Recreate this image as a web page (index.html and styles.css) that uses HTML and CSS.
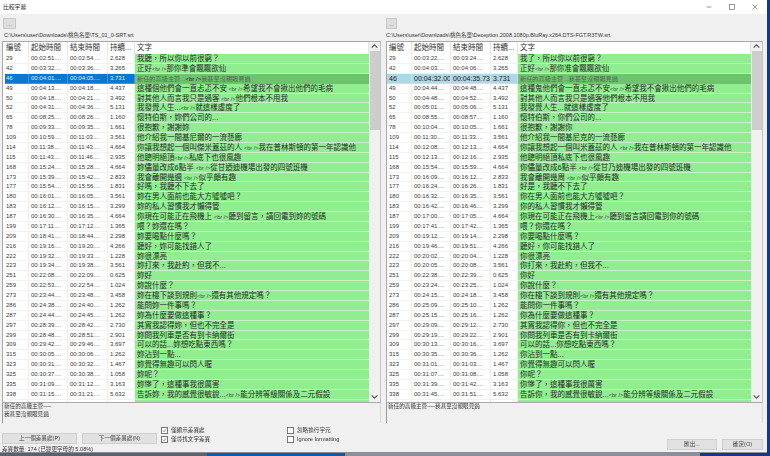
FILE: index.html
```html
<!DOCTYPE html>
<html lang="zh-Hant">
<head>
<meta charset="utf-8">
<title>比較字幕</title>
<link rel="stylesheet" href="styles.css">
</head>
<body>
<div class="window">
  <header class="titlebar">
    <span class="title">比較字幕</span>
    <div class="controls">
      <svg class="ctl" viewBox="0 0 10 10"><path d="M1 5h8" /></svg>
      <svg class="ctl" viewBox="0 0 10 10"><rect x="1" y="1" width="8" height="8" /></svg>
      <svg class="ctl" viewBox="0 0 10 10"><path d="M1 1l8 8M9 1l-8 8" /></svg>
    </div>
  </header>
  <main class="panes">
    <section class="pane pane-left">
      <button class="browse">...</button>
      <div class="path">C:\Users\user\Downloads\桃色名單\TS_01_0-SRT.srt</div>
      <div class="list">
        <div class="table">
          <div class="row head"><span>編號</span><span>起始時間</span><span>結束時間</span><span>持續...</span><span>文字</span></div>
          <div class="row"><span>29</span><span>00:02:51....</span><span>00:02:54....</span><span>2.628</span><span class="txt">我聽，所以你以前很窮？</span></div>
          <div class="row"><span>42</span><span>00:03:32....</span><span>00:03:36....</span><span>3.265</span><span class="txt">正好<i>&lt;br /&gt;</i>那你準會飄飄欲仙</span></div>
          <div class="row sel"><span>46</span><span>00:04:01....</span><span>00:04:05....</span><span>3.731</span><span class="txt">新任的高級主管...<i>&lt;br /&gt;</i>我甚至沒親眼見過</span></div>
          <div class="row"><span>49</span><span>00:04:13....</span><span>00:04:18....</span><span>4.437</span><span class="txt">這種個他們會一直忐忑不安<i> &lt;br /&gt;</i>希望我不會揪出他們的毛病</span></div>
          <div class="row"><span>50</span><span>00:04:18....</span><span>00:04:21....</span><span>3.492</span><span class="txt">對其他人而言我只是過客<i> &lt;br /&gt;</i>他們根本不甩我</span></div>
          <div class="row"><span>52</span><span>00:04:31....</span><span>00:04:36....</span><span>5.131</span><span class="txt">我發覺人生...<i>&lt;br /&gt;</i>就這樣虛度了</span></div>
          <div class="row"><span>65</span><span>00:08:25....</span><span>00:08:26....</span><span>1.160</span><span class="txt">懷特伯斯，妳們公司的...</span></div>
          <div class="row"><span>78</span><span>00:09:33....</span><span>00:09:35....</span><span>1.661</span><span class="txt">很抱歉，謝謝妳</span></div>
          <div class="row"><span>109</span><span>00:10:59....</span><span>00:11:03....</span><span>3.561</span><span class="txt">他介紹我一間基尼爾的一流藝廊</span></div>
          <div class="row"><span>114</span><span>00:11:38....</span><span>00:11:43....</span><span>4.664</span><span class="txt">你讓我想起一個叫傑米蓋茲的人 <i>&lt;br /&gt;</i>我在普林斯頓的第一年認識他</span></div>
          <div class="row"><span>115</span><span>00:11:43....</span><span>00:11:46....</span><span>2.935</span><span class="txt">他聰明絕頂<i>&lt;br /&gt;</i>私底下也很風趣</span></div>
          <div class="row"><span>168</span><span>00:15:24....</span><span>00:15:28....</span><span>4.664</span><span class="txt">妳儘量改成6點半 <i>&lt;br /&gt;</i>從甘迺迪機場出發的四號班機</span></div>
          <div class="row"><span>173</span><span>00:15:39....</span><span>00:15:42....</span><span>2.833</span><span class="txt">我會離開幾週 <i>&lt;br /&gt;</i>似乎頗有趣</span></div>
          <div class="row"><span>177</span><span>00:15:54....</span><span>00:15:56....</span><span>1.831</span><span class="txt">好嗎，我聽不下去了</span></div>
          <div class="row"><span>180</span><span>00:16:01....</span><span>00:16:05....</span><span>3.561</span><span class="txt">妳在男人面前也能大方噓噓吧？</span></div>
          <div class="row"><span>183</span><span>00:16:12....</span><span>00:16:15....</span><span>3.299</span><span class="txt">妳的私人習慣我才懶得管</span></div>
          <div class="row"><span>187</span><span>00:16:30....</span><span>00:16:35....</span><span>4.664</span><span class="txt">你現在可能正在飛機上 <i>&lt;br /&gt;</i>聽到留言，請回電到妳的號碼</span></div>
          <div class="row"><span>199</span><span>00:17:11....</span><span>00:17:12....</span><span>1.365</span><span class="txt">喂？妳還在嗎？</span></div>
          <div class="row"><span>209</span><span>00:18:41....</span><span>00:18:44....</span><span>2.298</span><span class="txt">妳要喝點什麼嗎？</span></div>
          <div class="row"><span>216</span><span>00:19:16....</span><span>00:19:20....</span><span>4.266</span><span class="txt">聽好，妳可能找錯人了</span></div>
          <div class="row"><span>222</span><span>00:19:32....</span><span>00:19:33....</span><span>1.228</span><span class="txt">妳很漂亮</span></div>
          <div class="row"><span>223</span><span>00:19:34....</span><span>00:19:38....</span><span>3.561</span><span class="txt">妳打來，我赴約，但我不...</span></div>
          <div class="row"><span>251</span><span>00:22:08....</span><span>00:22:09....</span><span>0.625</span><span class="txt">妳好</span></div>
          <div class="row"><span>259</span><span>00:22:53....</span><span>00:22:54....</span><span>1.024</span><span class="txt">妳說什麼？</span></div>
          <div class="row"><span>273</span><span>00:23:44....</span><span>00:23:48....</span><span>3.458</span><span class="txt">妳在樓下談到規則<i>&lt;br /&gt;</i>還有其他規定嗎？</span></div>
          <div class="row"><span>286</span><span>00:24:38....</span><span>00:24:40....</span><span>1.262</span><span class="txt">能問妳一件事嗎？</span></div>
          <div class="row"><span>287</span><span>00:24:44....</span><span>00:24:45....</span><span>1.262</span><span class="txt">妳為什麼要做這種事？</span></div>
          <div class="row"><span>297</span><span>00:28:39....</span><span>00:28:42....</span><span>2.730</span><span class="txt">其實我認得妳，但也不完全是</span></div>
          <div class="row"><span>299</span><span>00:28:48....</span><span>00:28:51....</span><span>2.901</span><span class="txt">妳問我列車是否有到卡納爾街</span></div>
          <div class="row"><span>309</span><span>00:29:42....</span><span>00:29:46....</span><span>3.697</span><span class="txt">可以的話...妳想吃點東西嗎？</span></div>
          <div class="row"><span>315</span><span>00:30:05....</span><span>00:30:06....</span><span>1.262</span><span class="txt">妳沾到一點...</span></div>
          <div class="row"><span>323</span><span>00:30:31....</span><span>00:30:32....</span><span>1.467</span><span class="txt">妳覺得無趣可以閃人喔</span></div>
          <div class="row"><span>325</span><span>00:30:37....</span><span>00:30:38....</span><span>1.058</span><span class="txt">妳呢？</span></div>
          <div class="row"><span>335</span><span>00:31:09....</span><span>00:31:12....</span><span>3.163</span><span class="txt">妳慘了，這種事我很厲害</span></div>
          <div class="row"><span>338</span><span>00:31:15....</span><span>00:31:21....</span><span>5.632</span><span class="txt">告訴妳，我的感覺很敏銳...<i>&lt;br /&gt;</i>能分辨等級關係及二元假設</span></div>
          <div class="row"><span></span><span></span><span></span><span></span><span class="txt"></span></div>
        </div>
        <div class="scrollbar">
          <svg class="arrow" viewBox="0 0 8 8"><path d="M1.5 5L4 2.5L6.5 5" /></svg>
          <div class="thumb"></div>
          <svg class="arrow" viewBox="0 0 8 8"><path d="M1.5 3L4 5.5L6.5 3" /></svg>
        </div>
      </div>
      <div class="preview">新任的高級主管──<br>我甚至沒親眼見過</div>
    </section>
    <section class="pane pane-right">
      <button class="browse">...</button>
      <div class="path">C:\Users\user\Downloads\桃色名單\Deception.2008.1080p.BluRay.x264.DTS-FGT.R3TW.srt</div>
      <div class="list">
        <div class="table">
          <div class="row head"><span>編號</span><span>起始時間</span><span>結束時間</span><span>持續...</span><span>文字</span></div>
          <div class="row"><span>29</span><span>00:03:22....</span><span>00:03:24....</span><span>2.628</span><span class="txt">我了，所以你以前很窮？</span></div>
          <div class="row"><span>42</span><span>00:04:03....</span><span>00:04:06....</span><span>3.265</span><span class="txt">正好<i>&lt;br /&gt;</i>那你准會飄飄欲仙</span></div>
          <div class="row alt"><span>46</span><span>00:04:32.00</span><span>00:04:35.73</span><span>3.731</span><span class="txt">新任的高級主管...我甚至沒親眼見過</span></div>
          <div class="row"><span>49</span><span>00:04:44....</span><span>00:04:48....</span><span>4.437</span><span class="txt">這種鬼他們會一直忐忑不安<i>&lt;br /&gt;</i>希望我不會揪出他們的毛病</span></div>
          <div class="row"><span>50</span><span>00:04:48....</span><span>00:04:52....</span><span>3.492</span><span class="txt">對其他人而言我只是過客他們根本不甩我</span></div>
          <div class="row"><span>52</span><span>00:05:01....</span><span>00:05:06....</span><span>5.131</span><span class="txt">我發覺人生...就這樣虛度了</span></div>
          <div class="row"><span>65</span><span>00:08:55....</span><span>00:08:57....</span><span>1.160</span><span class="txt">懷特伯斯，你們公司的...</span></div>
          <div class="row"><span>78</span><span>00:10:04....</span><span>00:10:05....</span><span>1.661</span><span class="txt">很抱歉，謝謝你</span></div>
          <div class="row"><span>109</span><span>00:11:30....</span><span>00:11:33....</span><span>3.561</span><span class="txt">他介紹我一間基尼克的一流藝廊</span></div>
          <div class="row"><span>114</span><span>00:12:08....</span><span>00:12:13....</span><span>4.664</span><span class="txt">你讓我想起一個叫米蓋茲的人 <i>&lt;br /&gt;</i>我在普林斯頓的第一年認識他</span></div>
          <div class="row"><span>115</span><span>00:12:13....</span><span>00:12:16....</span><span>2.935</span><span class="txt">他聰明絕頂私底下也很風趣</span></div>
          <div class="row"><span>168</span><span>00:15:54....</span><span>00:15:59....</span><span>4.664</span><span class="txt">你儘量改成6點半 <i>&lt;br /&gt;</i>從甘乃迪機場出發的四號班機</span></div>
          <div class="row"><span>173</span><span>00:16:09....</span><span>00:16:12....</span><span>2.833</span><span class="txt">我會離開幾周 <i>&lt;br /&gt;</i>似乎頗有趣</span></div>
          <div class="row"><span>177</span><span>00:16:24....</span><span>00:16:26....</span><span>1.831</span><span class="txt">好是，我聽不下去了</span></div>
          <div class="row"><span>180</span><span>00:16:32....</span><span>00:16:35....</span><span>3.561</span><span class="txt">你在男人面前也能大方噓噓吧？</span></div>
          <div class="row"><span>183</span><span>00:16:42....</span><span>00:16:46....</span><span>3.299</span><span class="txt">你的私人習慣我才懶得管</span></div>
          <div class="row"><span>187</span><span>00:17:00....</span><span>00:17:05....</span><span>4.664</span><span class="txt">你現在可能正在飛機上<i>&lt;br /&gt;</i>聽到留言請回電到你的號碼</span></div>
          <div class="row"><span>199</span><span>00:17:41....</span><span>00:17:42....</span><span>1.365</span><span class="txt">喂？你還在嗎？</span></div>
          <div class="row"><span>209</span><span>00:19:12....</span><span>00:19:14....</span><span>2.298</span><span class="txt">你要喝點什麼嗎？</span></div>
          <div class="row"><span>216</span><span>00:19:46....</span><span>00:19:51....</span><span>4.266</span><span class="txt">聽好，你可能找錯人了</span></div>
          <div class="row"><span>222</span><span>00:20:02....</span><span>00:20:04....</span><span>1.228</span><span class="txt">你很漂亮</span></div>
          <div class="row"><span>223</span><span>00:20:05....</span><span>00:20:08....</span><span>3.561</span><span class="txt">你打來，我赴約，但我不...</span></div>
          <div class="row"><span>251</span><span>00:22:38....</span><span>00:22:39....</span><span>0.625</span><span class="txt">你好</span></div>
          <div class="row"><span>259</span><span>00:23:24....</span><span>00:23:25....</span><span>1.024</span><span class="txt">你說什麼？</span></div>
          <div class="row"><span>273</span><span>00:24:15....</span><span>00:24:18....</span><span>3.458</span><span class="txt">你在樓下談到規則<i>&lt;br /&gt;</i>還有其他規定嗎？</span></div>
          <div class="row"><span>286</span><span>00:25:09....</span><span>00:25:10....</span><span>1.262</span><span class="txt">能問你一件事嗎？</span></div>
          <div class="row"><span>287</span><span>00:25:15....</span><span>00:25:16....</span><span>1.262</span><span class="txt">你為什麼要做這種事？</span></div>
          <div class="row"><span>297</span><span>00:29:09....</span><span>00:29:12....</span><span>2.730</span><span class="txt">其實我認得你，但也不完全是</span></div>
          <div class="row"><span>299</span><span>00:29:19....</span><span>00:29:22....</span><span>2.901</span><span class="txt">你問我列車是否有到卡納爾街</span></div>
          <div class="row"><span>309</span><span>00:30:13....</span><span>00:30:16....</span><span>3.697</span><span class="txt">可以的話...你想吃點東西嗎？</span></div>
          <div class="row"><span>315</span><span>00:30:35....</span><span>00:30:36....</span><span>1.262</span><span class="txt">你沾到一點...</span></div>
          <div class="row"><span>323</span><span>00:31:01....</span><span>00:31:03....</span><span>1.467</span><span class="txt">你覺得無趣可以閃人喔</span></div>
          <div class="row"><span>325</span><span>00:31:07....</span><span>00:31:08....</span><span>1.058</span><span class="txt">你呢？</span></div>
          <div class="row"><span>335</span><span>00:31:39....</span><span>00:31:42....</span><span>3.163</span><span class="txt">你慘了，這種事我很厲害</span></div>
          <div class="row"><span>338</span><span>00:31:45....</span><span>00:31:51....</span><span>5.632</span><span class="txt">告訴你，我的感覺很敏銳...<i>&lt;br /&gt;</i>能分辨等級關係及二元假設</span></div>
          <div class="row"><span></span><span></span><span></span><span></span><span class="txt"></span></div>
        </div>
        <div class="scrollbar">
          <svg class="arrow" viewBox="0 0 8 8"><path d="M1.5 5L4 2.5L6.5 5" /></svg>
          <div class="thumb"></div>
          <svg class="arrow" viewBox="0 0 8 8"><path d="M1.5 3L4 5.5L6.5 3" /></svg>
        </div>
      </div>
      <div class="preview">新任的高級主管──我甚至沒親眼見過</div>
    </section>
  </main>
  <footer class="footer">
    <div class="foot-left">
      <div class="nav">
        <button class="btn btn-nav">上一個差異處(P)</button>
        <button class="btn btn-nav">下一個差異處(N)</button>
      </div>
      <div class="status">差異數量: 174 (已變更字母的 5.08%)</div>
    </div>
    <div class="checks">
      <label class="check"><span class="box on"><svg viewBox="0 0 8 8"><path d="M1.5 4L3.3 6L6.5 2" /></svg></span>僅顯示差異處</label>
      <label class="check"><span class="box on"><svg viewBox="0 0 8 8"><path d="M1.5 4L3.3 6L6.5 2" /></svg></span>僅尋找文字差異</label>
    </div>
    <div class="checks checks-2">
      <label class="check"><span class="box"></span>忽略換行字元</label>
      <label class="check"><span class="box"></span>Ignore formatting</label>
    </div>
    <div class="actions">
      <button class="btn btn-export">匯出...</button>
      <button class="btn btn-ok">確定(O)</button>
    </div>
  </footer>
</div>
<div class="desktop">
  <span class="d1"></span><span class="d2"></span><span class="d3"></span><span class="d4"></span>
</div>
</body>
</html>
```
FILE: styles.css
```css
* { box-sizing: border-box; }
html, body { margin: 0; padding: 0; }
body {
  width: 770px;
  height: 456px;
  overflow: hidden;
  background: #10398c;
  font-family: "Liberation Sans", "Noto Sans CJK TC", sans-serif;
  color: #222;
}
.window {
  width: 767px;
  height: 453px;
  background: #f0f0f0;
  border-bottom: 1px solid #8b8d90;
  display: flex;
  flex-direction: column;
  filter: blur(0.35px);
}
.titlebar {
  height: 14px;
  background: #fff;
  display: flex;
  align-items: center;
  justify-content: space-between;
  padding-left: 3px;
}
.title { font-size: 5.8px; line-height: 12px; }
.controls { display: flex; gap: 17px; padding-right: 9px; margin-top: -1px; }
.ctl { width: 6px; height: 6px; display: block; fill: none; stroke: #555; stroke-width: 1; }
.panes {
  height: 409px;
  padding: 0 3px 0 2px;
  display: grid;
  grid-template-columns: 379px 377px;
  column-gap: 5px;
}
.pane { display: flex; flex-direction: column; min-width: 0; }
.browse {
  width: 13px;
  height: 11px;
  margin: 4px 0 0 1px;
  padding: 0;
  border: 1px solid #c8c8c8;
  background: #dedede;
  color: #555;
  font: 6px/8px "Liberation Sans", sans-serif;
}
.pane-right .browse { margin-left: 0; width: 11px; }
.path {
  height: 12px;
  padding-left: 2px;
  font-size: 5.5px;
  line-height: 12px;
  white-space: nowrap;
  overflow: hidden;
  color: #333;
}
.pane-right .path { padding-left: 0; }
.list {
  height: 362px;
  border: 1px solid #a9a9a9;
  border-right-color: #c4c4c4;
  background: #fff;
  display: flex;
  overflow: hidden;
}
.table { flex: 1; min-width: 0; overflow: hidden; padding-left: 2px; }
.row {
  display: grid;
  grid-template-columns: 24px 39px 40px 27px 1fr;
  height: 9.88px;
  font-size: 6px;
  line-height: 9.88px;
  color: #3a3a3a;
  white-space: nowrap;
}
.pane-right .row { grid-template-columns: 25px 39px 40px 27px 1fr; }
.pane-right .table { padding-left: 0; }
.row > span {
  overflow: hidden;
  padding-left: 2px;
  border-right: 1px solid #eee;
  border-bottom: 1px solid #f2f2f2;
}
.row > span:first-child { padding-left: 1px; }
.pane-right .row > span:first-child { padding-left: 2px; }
.row.head {
  height: 12px;
  font-size: 7.5px;
  line-height: 12px;
  color: #333;
}
.row.head > span { border-bottom: 0; border-right: 1px solid #e4e4e4; }
.row .txt {
  background: #90ee90;
  color: #2a2a2a;
  font-size: 7.5px;
  border-right: 0;
  border-bottom: 1px solid #c4f4c4;
  padding-left: 2px;
}
.row .txt i { font-style: normal; font-size: 5.5px; color: #444; }
.row.sel > span { background: #0a78d2; color: #dcebf8; border-color: #3d93dc; }
.row.alt > span { background: #add8e6; color: #222; font-size: 7px; border-color: #c4e2ec; }
.row.sel .txt, .row.alt .txt {
  background: #6dc46d;
  color: #4d6a4d;
  font-size: 6.2px;
  border-bottom-color: #6dc46d;
}
.row.sel .txt i { color: #222; font-size: 6px; }
.scrollbar {
  width: 11px;
  flex: none;
  background: #f0f0f0;
  display: flex;
  flex-direction: column;
  padding-left: 1px;
}
.arrow { width: 9px; height: 9px; margin-top: 0; fill: none; stroke: #555; stroke-width: 1; flex: none; display: block; }
.thumb { height: 79px; background: #cdcdcd; }
.scrollbar .thumb + .arrow { margin-top: auto; margin-bottom: 1px; }
.preview {
  height: 20px;
  border-left: 1px solid #9a9a9a;
  border-right: 1px solid #d8d8d8;
  background: #f0f0f0;
  padding: 0 1px;
  font-size: 5.6px;
  line-height: 7.5px;
  color: #333;
}
.footer {
  flex: 1;
  display: flex;
  padding-left: 2px;
  padding-right: 4px;
  min-height: 0;
}
.foot-left { width: 159px; padding-top: 10px; }
.nav { display: flex; gap: 5px; }
.btn {
  padding: 0;
  height: 11px;
  border: 1px solid #cfcfcf;
  background: #e1e1e1;
  color: #444;
  font: 5.6px/9px "Liberation Sans", "Noto Sans CJK TC", sans-serif;
  white-space: nowrap;
}
.btn-nav { width: 75px; }
.status { font-size: 5.6px; line-height: 10px; color: #333; white-space: nowrap; }
.checks { width: 126px; padding-top: 3px; display: flex; flex-direction: column; gap: 1px; }
.check { display: flex; align-items: center; gap: 3px; height: 8px; font-size: 5.6px; line-height: 8px; color: #333; white-space: nowrap; }
.box { width: 7px; height: 7px; border: 1px solid #777; background: #fff; flex: none; display: block; }
.box svg { display: block; width: 5px; height: 5px; fill: none; stroke: #444; stroke-width: 1; }
.checks-2 { width: 200px; }
.actions { margin-left: auto; padding-top: 16px; display: flex; gap: 5px; align-items: flex-start; }
.btn-export { width: 50px; }
.btn-ok { width: 41px; }
.desktop { display: flex; height: 3px; }
.desktop span { display: block; height: 3px; }
.d1 { width: 207px; background: #5a6270; }
.d2 { width: 138px; background: #0a5cb0; }
.d3 { width: 355px; background: #8a8f98; }
.d4 { width: 70px; background: #10398c; }
```
